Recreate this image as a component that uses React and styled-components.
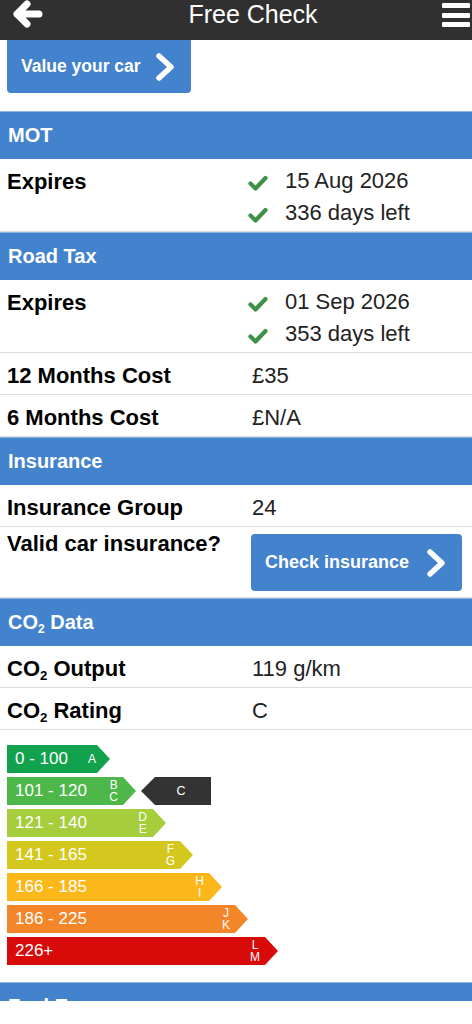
import React from 'react';
import styled, { createGlobalStyle } from 'styled-components';

const GlobalStyle = createGlobalStyle`
  html, body { margin: 0; padding: 0; background: #fff; }
  body {
    font-family: "Liberation Sans", Arial, Helvetica, sans-serif;
    -webkit-font-smoothing: antialiased;
  }
  * { box-sizing: border-box; }
`;

const BLUE = '#4382cc';

const Page = styled.div`
  height: 1001px;
  overflow: hidden;
  background: #fff;
`;

const TopBar = styled.header`
  height: 40px;
  background: #303030;
  color: #fff;
  display: grid;
  grid-template-columns: 70px 1fr 36px;
  align-items: start;
`;

const BackButton = styled.div`
  height: 28px;
  display: flex;
  align-items: center;
  padding-left: 13px;
`;

const Title = styled.h1`
  margin: 0;
  font-size: 25px;
  font-weight: 400;
  line-height: 28px;
  text-align: center;
`;

const MenuButton = styled.div`
  display: flex;
  flex-direction: column;
  gap: 4.5px;
  width: 28px;
  margin-left: 6px;
  padding-top: 3px;
`;

const MenuBar = styled.span`
  display: block;
  height: 5px;
  border-radius: 1px;
  background: #fff;
`;

const ButtonArea = styled.div`
  padding: 0 0 18px 7px;
`;

const ActionButton = styled.button`
  display: flex;
  align-items: center;
  justify-content: ${p => (p.$fill ? 'space-between' : 'flex-start')};
  gap: 15px;
  height: ${p => p.$h}px;
  width: ${p => (p.$fill ? '100%' : 'auto')};
  padding: 0 17px 0 14px;
  background: ${BLUE};
  color: #fff;
  border: 0;
  border-radius: ${p => (p.$flushTop ? '0 0 4px 4px' : '4px')};
  font-family: "Liberation Sans", Arial, sans-serif;
  font-weight: bold;
  font-size: ${p => p.$fs}px;
  cursor: pointer;
`;

const SectionHeader = styled.div`
  height: 48px;
  display: flex;
  align-items: center;
  padding-left: 8px;
  background: ${BLUE};
  border-top: 1px solid #8fb3e0;
  color: #fff;
  font-weight: bold;
  font-size: 20px;
`;

const Row = styled.div`
  display: grid;
  grid-template-columns: 244px 1fr;
  padding: ${p => (p.$compact ? '0 10px 6px 7px' : '6px 10px 2px 7px')};
  border-bottom: 1px solid #dcdcdc;
  line-height: 33px;
`;

const Label = styled.div`
  font-weight: bold;
  font-size: 22px;
  color: #000;
  white-space: nowrap;
`;

const Value = styled.div`
  font-size: 22px;
  color: #222;
  padding-left: 1px;
`;

const ButtonCell = styled.div`
  padding-top: 7px;
`;

const StatusLine = styled.div`
  display: flex;
  align-items: center;
  line-height: 32px;
  margin-left: -4px;
`;

const CheckSvg = styled.svg`
  flex: none;
  margin: 3px 17px 0 0;
`;

const Sub = styled.sub`
  font-size: 0.6em;
  line-height: 0;
  vertical-align: -0.3em;
`;

const Chart = styled.div`
  display: flex;
  flex-direction: column;
  gap: 4px;
  padding: 15px 0 17px 7px;
`;

const BandRow = styled.div`
  display: flex;
  align-items: center;
  gap: 5px;
  height: 28px;
`;

const Band = styled.div`
  height: 28px;
  width: ${p => p.$w}px;
  background: ${p => p.$c};
  clip-path: polygon(0 0, calc(100% - 13px) 0, 100% 50%, calc(100% - 13px) 100%, 0 100%);
  display: flex;
  align-items: center;
  padding: 0 ${p => p.$pr}px 0 8px;
  color: #fff;
`;

const Range = styled.span`
  flex: 1;
  font-size: 17px;
`;

const Letters = styled.span`
  display: flex;
  flex-direction: column;
  align-items: center;
  font-size: 12px;
  line-height: 12.5px;
`;

const Marker = styled.div`
  width: 70px;
  height: 28px;
  background: #333;
  clip-path: polygon(14px 0, 100% 0, 100% 100%, 14px 100%, 0 50%);
  display: flex;
  align-items: center;
  justify-content: center;
  padding-left: 10px;
  color: #fff;
  font-size: 12.5px;
`;

const Chevron = () => (
  <svg width="18" height="28" viewBox="0 0 18 28" aria-hidden="true">
    <path d="M3 3 L15 14 L3 25" fill="none" stroke="#fff" strokeWidth="5.5" strokeLinecap="round" strokeLinejoin="round" />
  </svg>
);

const Check = () => (
  <CheckSvg width="20" height="16" viewBox="0 0 20 16" aria-hidden="true">
    <path d="M2.5 8.5 L7.5 13.5 L17.5 3" fill="none" stroke="#3f9145" strokeWidth="4.2" strokeLinecap="round" strokeLinejoin="round" />
  </CheckSvg>
);

const Co2 = () => (
  <>
    CO<Sub>2</Sub>
  </>
);

const bands = [
  { range: '0 - 100', letters: ['A'], w: 103, c: '#12a24d', pr: 14 },
  { range: '101 - 120', letters: ['B', 'C'], w: 129, c: '#4db849', pr: 18, marker: 'C' },
  { range: '121 - 140', letters: ['D', 'E'], w: 159, c: '#a5cd3c', pr: 19 },
  { range: '141 - 165', letters: ['F', 'G'], w: 186, c: '#d4c71d', pr: 18 },
  { range: '166 - 185', letters: ['H', 'I'], w: 215, c: '#fcb81b', pr: 18 },
  { range: '186 - 225', letters: ['J', 'K'], w: 241, c: '#f38628', pr: 18 },
  { range: '226+', letters: ['L', 'M'], w: 271, c: '#d90a0a', pr: 18 },
];

const Status = ({ lines }) => (
  <Value>
    {lines.map(l => (
      <StatusLine key={l}>
        <Check />
        {l}
      </StatusLine>
    ))}
  </Value>
);

export default function App() {
  return (
    <Page>
      <GlobalStyle />
      <TopBar>
        <BackButton>
          <svg width="30" height="28" viewBox="0 0 30 28" aria-label="Back">
            <path d="M14 4 L4 14 L14 24 M4 14 H26" fill="none" stroke="#fff" strokeWidth="7" strokeLinecap="round" strokeLinejoin="round" />
          </svg>
        </BackButton>
        <Title>Free Check</Title>
        <MenuButton aria-label="Menu">
          <MenuBar />
          <MenuBar />
          <MenuBar />
        </MenuButton>
      </TopBar>

      <ButtonArea>
        <ActionButton $h={53} $fs={17.5} $flushTop>
          Value your car
          <Chevron />
        </ActionButton>
      </ButtonArea>

      <SectionHeader>MOT</SectionHeader>
      <Row>
        <Label>Expires</Label>
        <Status lines={['15 Aug 2026', '336 days left']} />
      </Row>

      <SectionHeader>Road Tax</SectionHeader>
      <Row>
        <Label>Expires</Label>
        <Status lines={['01 Sep 2026', '353 days left']} />
      </Row>
      <Row>
        <Label>12 Months Cost</Label>
        <Value>£35</Value>
      </Row>
      <Row>
        <Label>6 Months Cost</Label>
        <Value>£N/A</Value>
      </Row>

      <SectionHeader>Insurance</SectionHeader>
      <Row>
        <Label>Insurance Group</Label>
        <Value>24</Value>
      </Row>
      <Row $compact>
        <Label>Valid car insurance?</Label>
        <ButtonCell>
          <ActionButton $h={57} $fs={18} $fill>
            Check insurance
            <Chevron />
          </ActionButton>
        </ButtonCell>
      </Row>

      <SectionHeader>
        <span>
          <Co2 /> Data
        </span>
      </SectionHeader>
      <Row>
        <Label>
          <Co2 /> Output
        </Label>
        <Value>119 g/km</Value>
      </Row>
      <Row>
        <Label>
          <Co2 /> Rating
        </Label>
        <Value>C</Value>
      </Row>

      <Chart>
        {bands.map(b => (
          <BandRow key={b.range}>
            <Band $w={b.w} $c={b.c} $pr={b.pr}>
              <Range>{b.range}</Range>
              <Letters>
                {b.letters.map(l => (
                  <span key={l}>{l}</span>
                ))}
              </Letters>
            </Band>
            {b.marker && <Marker>{b.marker}</Marker>}
          </BandRow>
        ))}
      </Chart>

      <SectionHeader>Fuel Economy</SectionHeader>
    </Page>
  );
}
